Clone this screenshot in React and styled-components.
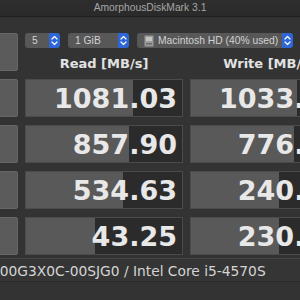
import React from 'react';
import styled, { createGlobalStyle } from 'styled-components';

const GlobalStyle = createGlobalStyle`
  html, body {
    margin: 0;
    padding: 0;
    background: #262626;
    overflow: hidden;
  }
`;

const Window = styled.div`
  width: 300px;
  height: 300px;
  overflow: hidden;
  background: #333333;
  display: flex;
  flex-direction: column;
`;

const TitleBar = styled.div`
  height: 16px;
  line-height: 16px;
  border-bottom: 1px solid #1f1f1f;
  background: linear-gradient(#2e2e2e, #2a2a2a);
  color: #a6a6a6;
  font-family: "Liberation Sans", Arial, sans-serif;
  font-size: 10.3px;
  text-align: center;
`;

const Content = styled.div`
  margin-left: -60px;
  padding-top: 16px;
  display: grid;
  grid-template-columns: 78px 158px 158px;
  grid-auto-rows: 38px;
  column-gap: 7px;
  row-gap: 8px;
`;

const SideButton = styled.div`
  box-sizing: border-box;
  background: #5b5b5b;
  border: 1px solid #666;
  border-radius: 2px;
  color: #eee;
  font-family: "DejaVu Sans", sans-serif;
  font-weight: bold;
  font-size: 10px;
  line-height: 12px;
  display: flex;
  align-items: center;
  justify-content: center;
  text-align: center;
  white-space: pre;
`;

const Controls = styled.div`
  grid-column: 2 / 4;
  display: flex;
  flex-direction: column;
`;

const Popups = styled.div`
  display: flex;
  gap: 8px;
`;

const Popup = styled.div`
  box-sizing: border-box;
  width: ${(p) => p.$w}px;
  height: 15px;
  border-radius: 3px;
  background: #585858;
  color: #d2d2d2;
  font-family: "Liberation Sans", Arial, sans-serif;
  font-size: 10.3px;
  display: flex;
  align-items: center;
  padding-left: 7px;
  overflow: hidden;
`;

const PopupLabel = styled.span`
  flex: 1;
  white-space: nowrap;
`;

const Stepper = styled.div`
  width: 11px;
  height: 15px;
  background: #2e66d8;
  border-radius: 0 3px 3px 0;
  display: flex;
  align-items: center;
  justify-content: center;
`;

const Headers = styled.div`
  margin-top: 8px;
  display: grid;
  grid-template-columns: 158px 158px;
  column-gap: 7px;
`;

const Header = styled.div`
  text-align: center;
  color: #e2e2e2;
  font-family: "DejaVu Sans", sans-serif;
  font-weight: bold;
  font-size: 13px;
  line-height: 15px;
  white-space: nowrap;
`;

const Cell = styled.div`
  box-sizing: border-box;
  border: 1px solid #4b4b4b;
  background: linear-gradient(
    to right,
    #595959 ${(p) => p.$fill}%,
    #2b2b2b ${(p) => p.$fill}%
  );
  color: #e8e8e8;
  font-family: "DejaVu Sans", sans-serif;
  font-weight: bold;
  font-size: 27px;
  display: flex;
  align-items: center;
  justify-content: flex-end;
  padding-right: 5px;
  white-space: nowrap;
`;

const Footer = styled.div`
  grid-column: 1 / -1;
  margin-top: -5px;
  height: 24px;
  box-sizing: border-box;
  border-top: 1px solid #444;
  border-bottom: 1px solid #2a2a2a;
  background: #353535;
  color: #d4d4d4;
  font-family: "DejaVu Sans", sans-serif;
  font-size: 13.8px;
  line-height: 24px;
  padding-left: 18px;
  white-space: nowrap;
`;

const Bottom = styled.div`
  flex: 1;
  background: #272727;
`;

function Chevrons() {
  return (
    <svg width="7" height="11" viewBox="0 0 7 11">
      <path d="M1 4 L3.5 1.5 L6 4 M1 7 L3.5 9.5 L6 7" fill="none" stroke="#fff" strokeWidth="1.2" strokeLinecap="round" strokeLinejoin="round" />
    </svg>
  );
}

function DiskIcon() {
  return (
    <svg width="10" height="12" viewBox="0 0 10 12" style={{ marginRight: 4 }}>
      <rect x="0.5" y="0.5" width="9" height="11" rx="1" fill="#9a9a9a" stroke="#7a7a7a" />
      <rect x="2" y="2" width="6" height="4" fill="#c4c4c4" />
      <rect x="2" y="8" width="6" height="1.5" fill="#6a6a6a" />
    </svg>
  );
}

const rows = [
  { label: 'SEQ1M\nQD8', read: '1081.03', rf: 68.4, write: '1033.86', wf: 67.7 },
  { label: 'SEQ1M\nQD1', read: '857.90', rf: 65.8, write: '776.42', wf: 65.8 },
  { label: 'RND4K\nQD64', read: '534.63', rf: 62, write: '240.17', wf: 56.3 },
  { label: 'RND4K\nQD1', read: '43.25', rf: 44.3, write: '230.51', wf: 56.3 },
];

export default function App() {
  return (
    <>
      <GlobalStyle />
      <Window>
        <TitleBar>AmorphousDiskMark 3.1</TitleBar>
        <Content>
          <SideButton>All</SideButton>
          <Controls>
            <Popups>
              <Popup $w={35}>
                <PopupLabel>5</PopupLabel>
                <Stepper><Chevrons /></Stepper>
              </Popup>
              <Popup $w={61}>
                <PopupLabel>1 GiB</PopupLabel>
                <Stepper><Chevrons /></Stepper>
              </Popup>
              <Popup $w={156}>
                <DiskIcon />
                <PopupLabel>Macintosh HD (40% used)</PopupLabel>
                <Stepper><Chevrons /></Stepper>
              </Popup>
            </Popups>
            <Headers>
              <Header>Read [MB/s]</Header>
              <Header>Write [MB/s]</Header>
            </Headers>
          </Controls>
          {rows.map((r) => (
            <React.Fragment key={r.label}>
              <SideButton>{r.label}</SideButton>
              <Cell $fill={r.rf}>{r.read}</Cell>
              <Cell $fill={r.wf}>{r.write}</Cell>
            </React.Fragment>
          ))}
          <Footer>WDS500G3X0C-00SJG0 / Intel Core i5-4570S</Footer>
        </Content>
        <Bottom />
      </Window>
    </>
  );
}
